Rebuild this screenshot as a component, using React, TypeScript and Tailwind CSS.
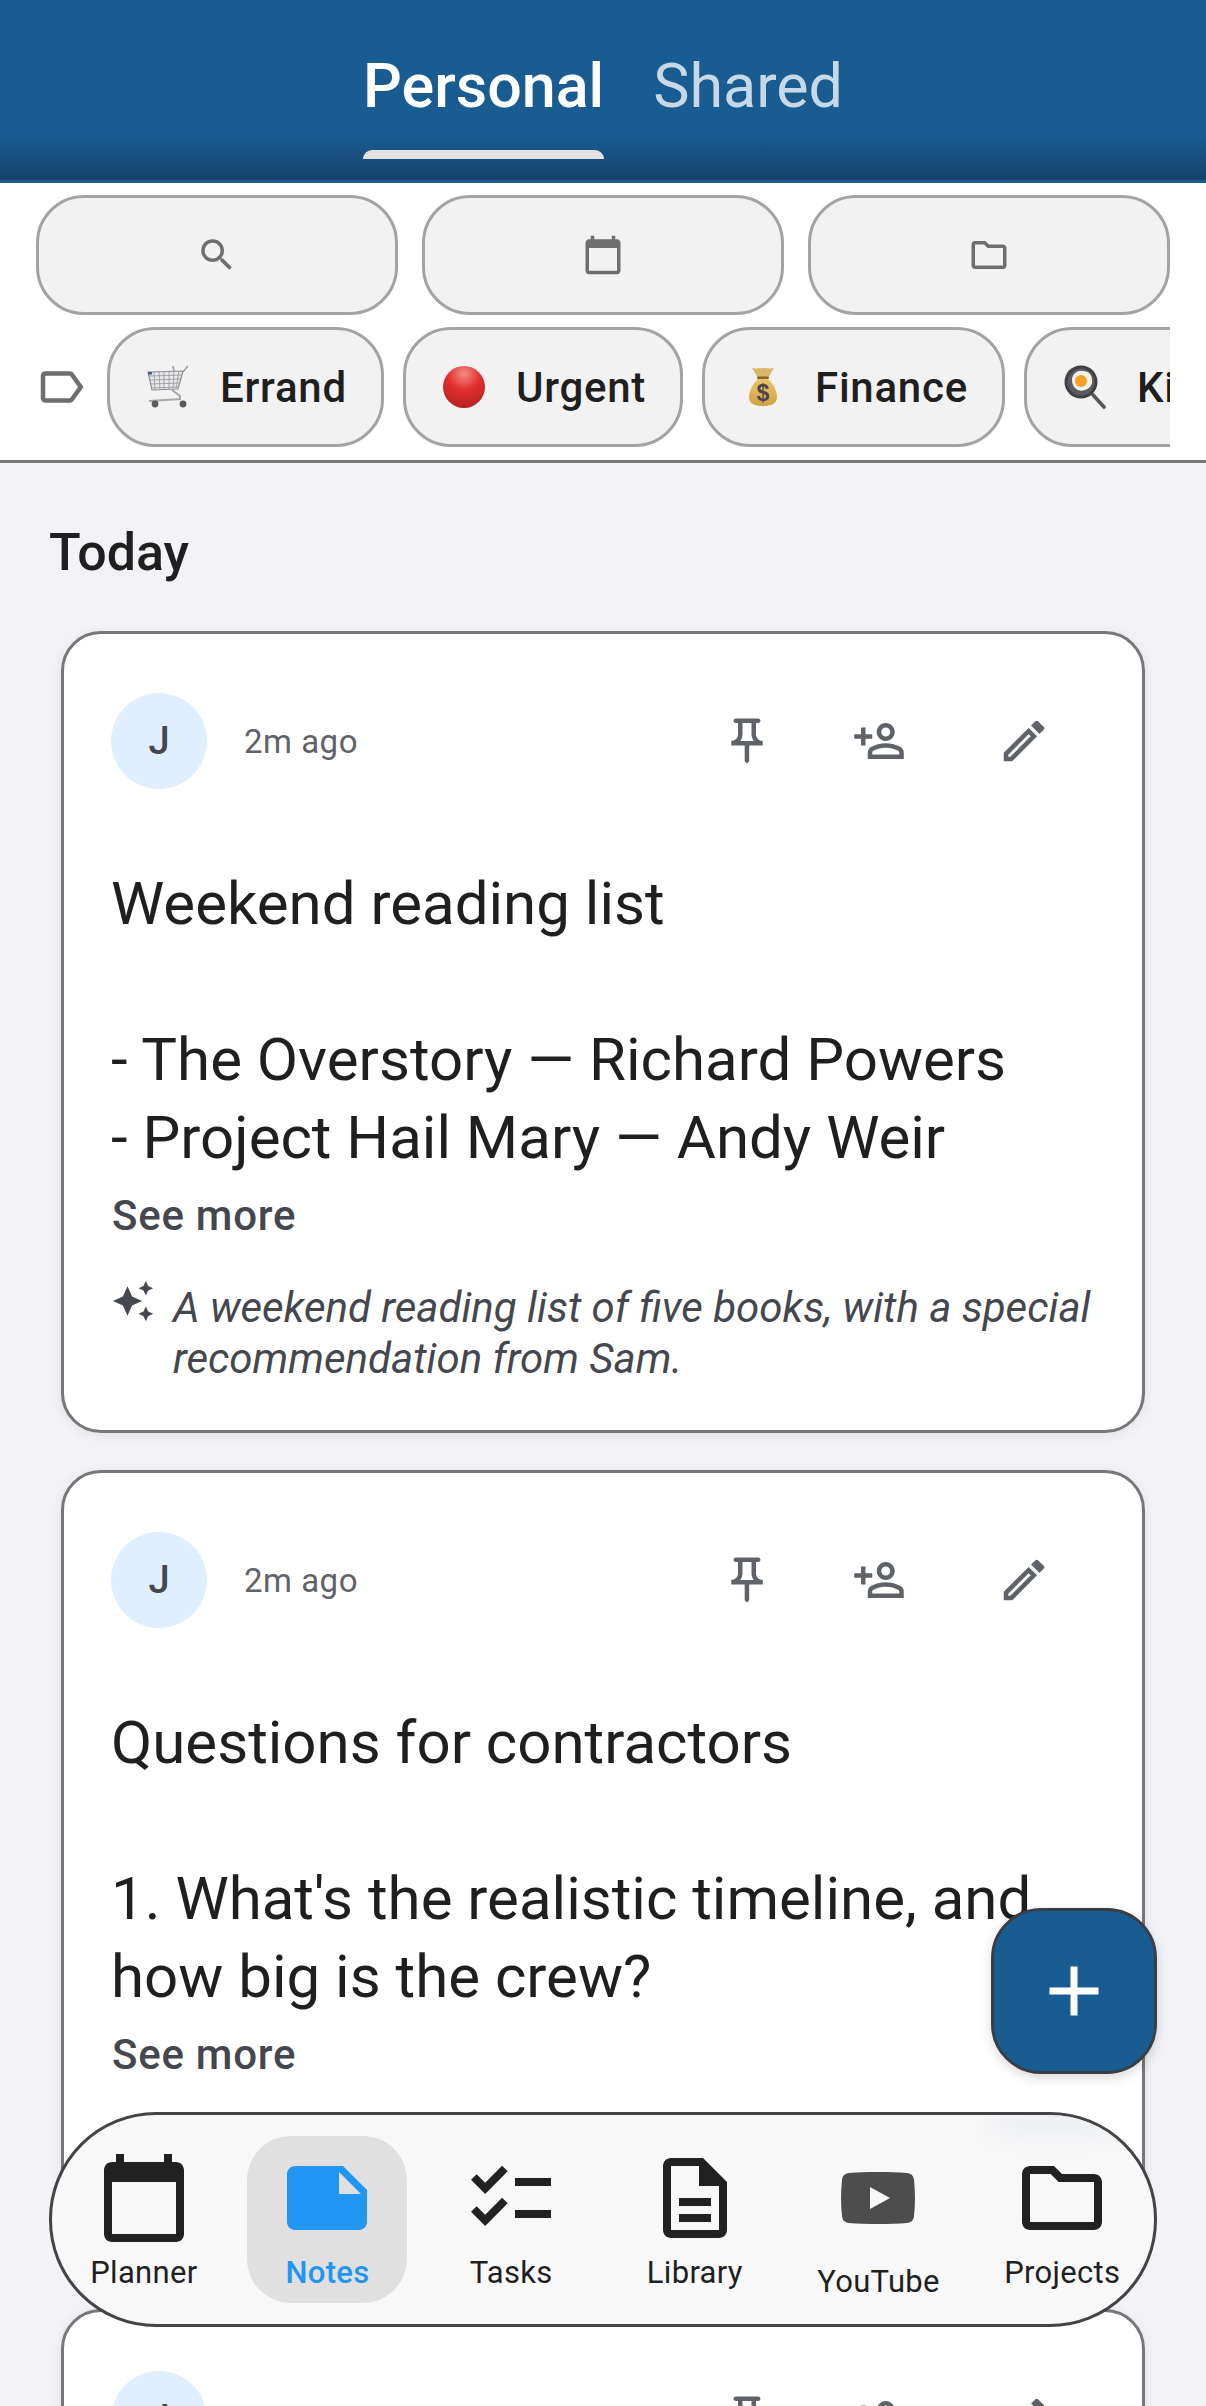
import React from "react";
import {
  MdSearch,
  MdCalendarToday,
  MdOutlineFolder,
  MdOutlineLabel,
  MdOutlinePushPin,
  MdOutlinePersonAddAlt,
  MdOutlineEdit,
  MdAutoAwesome,
  MdNote,
  MdChecklist,
  MdOutlineDescription,
  MdAdd,
} from "react-icons/md";

function CartEmoji() {
  return (
    <svg width="42" height="44" viewBox="0 0 42 44" fill="none">
      <path d="M1 7l35-1-5 18-26 1z" fill="#e9e9eb" />
      <path
        d="M2 11l33-1M3 15l31-1M3 19l30-1M4 23l28-1M7 7l1 18M12 7l1 18M17 7v18M22 6v18M27 6l-1 18M32 6l-3 18"
        stroke="#9c9ca0"
        strokeWidth="0.9"
      />
      <path d="M1 7l35-1-5 18-26 1z" stroke="#8f8f93" strokeWidth="1.2" />
      <rect x="1" y="7" width="4" height="2.5" fill="#3f5f8c" />
      <path d="M36 7l5-6M26 1l1 6" stroke="#a2a2a6" strokeWidth="1.6" />
      <path d="M25 25l8 6v4M2 36l32-2" stroke="#a8a8ab" strokeWidth="2" />
      <circle cx="8" cy="39" r="3.4" fill="#5a5a5e" />
      <circle cx="36" cy="39" r="3.4" fill="#5a5a5e" />
    </svg>
  );
}

function RedCircleEmoji() {
  return (
    <svg width="44" height="44" viewBox="0 0 44 44">
      <defs>
        <radialGradient id="redBall" cx="50%" cy="18%" r="85%">
          <stop offset="0%" stopColor="#f58a85" />
          <stop offset="45%" stopColor="#e0312f" />
          <stop offset="100%" stopColor="#b51f22" />
        </radialGradient>
      </defs>
      <circle cx="22" cy="22" r="21" fill="url(#redBall)" />
    </svg>
  );
}

function MoneyBagEmoji() {
  return (
    <svg width="30" height="40" viewBox="0 0 30 40">
      <defs>
        <linearGradient id="bagFill" x1="0" y1="0" x2="0" y2="1">
          <stop offset="0%" stopColor="#e8c468" />
          <stop offset="100%" stopColor="#d3a23f" />
        </linearGradient>
      </defs>
      <path d="M4 1c4 1 7 0 11 0s7 1 11 0l-6 10H10z" fill="#d9b66a" />
      <rect x="9" y="9.500" width="12" height="2.500" rx="1.200" fill="#8a6526" />
      <path d="M10 12h10c5 4 9 12 9 18 0 7-6 9-14 9s-14-2-14-9c0-6 4-14 9-18z" fill="url(#bagFill)" />
      <text
        x="15"
        y="34"
        textAnchor="middle"
        fontSize="23"
        fontWeight="700"
        fontFamily="Liberation Sans, sans-serif"
        fill="#4b4550"
      >
        $
      </text>
    </svg>
  );
}

function PanEmoji() {
  return (
    <svg width="42" height="44" viewBox="0 0 42 44">
      <path d="M29 30l11 12" stroke="#55565a" strokeWidth="3.600" strokeLinecap="round" />
      <circle cx="17" cy="17" r="16.500" fill="#3f4044" />
      <circle cx="17" cy="17" r="13.500" fill="#5a5b60" />
      <path d="M8 14c1-6 6-9 11-8 6 0 9 4 9 9 1 5-3 9-7 10-6 2-10-1-12-5-1-2-1-4-1-6z" fill="#f4f2e6" />
      <circle cx="17" cy="16" r="6" fill="#f3a224" />
    </svg>
  );
}

function YoutubeIcon() {
  return (
    <svg width="74" height="52" viewBox="0 0 74 52">
      <path
        d="M8 1C25-.3 49-.3 66 1c4 .3 6.700 3 7 7 1.300 12 1.300 24 0 36-.3 4-3 6.700-7 7-17 1.300-41 1.300-58 0-4-.3-6.700-3-7-7C-.3 32-.3 20 1 8c.3-4 3-6.700 7-7z"
        fill="#4d4d4d"
      />
      <path d="M29 15l20 11-20 11z" fill="#f8f8f9" />
    </svg>
  );
}

const chips = [
  { label: "Errand", icon: <CartEmoji />, width: "w-[277px]" },
  { label: "Urgent", icon: <RedCircleEmoji />, width: "w-[280px]" },
  { label: "Finance", icon: <MoneyBagEmoji />, width: "w-[303px]" },
  { label: "Kitchen", icon: <PanEmoji />, width: "w-[300px]" },
];

const navItems = [
  { label: "Planner", icon: <MdCalendarToday size={96} className="text-[#212121]" /> },
  { label: "Notes", icon: <MdNote size={96} className="text-[#2196f3]" />, active: true },
  { label: "Tasks", icon: <MdChecklist size={96} className="text-[#212121]" /> },
  { label: "Library", icon: <MdOutlineDescription size={96} className="text-[#212121]" /> },
  { label: "YouTube", icon: <YoutubeIcon />, low: true },
  { label: "Projects", icon: <MdOutlineFolder size={96} className="text-[#212121]" /> },
];

function FilterButton({ children }: { children: React.ReactNode }) {
  return (
    <div className="flex h-[120px] w-[362px] items-center justify-center rounded-[48px] border-[3px] border-[#a3a3a3] bg-[#f2f2f3] text-[#6e6e6e]">
      {children}
    </div>
  );
}

function NoteCard({
  lines,
  summary,
}: {
  lines?: string[];
  summary?: string[];
}) {
  return (
    <div className="h-[802px] w-[1084px] shrink-0 rounded-[40px] border-[3px] border-[#77777a] bg-white pl-[47px] pr-[50px] pt-[59px] shadow-[0_2px_12px_rgba(0,0,0,0.08)]">
      <div className="flex h-[96px] items-center">
        <div className="flex size-[96px] items-center justify-center rounded-full bg-[#dfefff] text-[38px] font-medium text-[#44474e]">
          J
        </div>
        <span className="ml-[37px] pt-[1px] text-[33px] tracking-[0.5px] text-[#5f6368]">2m ago</span>
        <div className="ml-auto flex items-center text-[#5f6368]">
          <MdOutlinePushPin size={54} className="mr-[78px]" />
          <MdOutlinePersonAddAlt size={54} className="mr-[91px] -scale-x-100" />
          <MdOutlineEdit size={54} className="mr-[41px]" />
        </div>
      </div>
      {lines && (
        <div className="mt-[76px] text-[60px] leading-[78px] text-[#1f1f1f]">
          {lines.map((l, i) => (
            <p key={i} className="min-h-[78px]">
              {l}
            </p>
          ))}
        </div>
      )}
      {lines && (
        <p className="ml-[1px] mt-[11px] text-[42px] font-medium leading-[56px] tracking-[0.75px] text-[#44474e]">
          See more
        </p>
      )}
      {summary && (
        <div className="mt-[38px] flex gap-[18px]">
          <MdAutoAwesome size={44} className="-mt-[3px] shrink-0 text-[#44474e]" />
          <div className="text-[42px] italic leading-[51px] text-[#44474e]">
            {summary.map((s) => (
              <p key={s}>{s}</p>
            ))}
          </div>
        </div>
      )}
    </div>
  );
}

export default function App() {
  return (
    <div className="relative h-[2406px] w-[1206px] overflow-hidden bg-[#f2f2f7] font-['Roboto',sans-serif]">
      {/* header tabs */}
      <div className="relative h-[183px] bg-[#195c91]">
        <div className="absolute inset-x-0 bottom-[3px] h-[45px] bg-gradient-to-b from-[#195c91] to-[#16426b]" />
        <div className="relative flex justify-center gap-[49px] pt-[51px] text-[61px] leading-[70px]">
          <div className="relative font-medium text-white">
            Personal
            <div className="absolute inset-x-0 top-[99px] h-[9px] rounded-t-[12px] bg-[#e2e2e2]" />
          </div>
          <div className="text-[#c7d8e6]">Shared</div>
        </div>
      </div>

      {/* filters */}
      <div className="border-b-[3px] border-[#77777a] bg-white pb-[13px] pt-[12px]">
        <div className="flex gap-[24px] pl-[36px]">
          <FilterButton>
            <MdSearch size={42} />
          </FilterButton>
          <FilterButton>
            <MdCalendarToday size={42} />
          </FilterButton>
          <FilterButton>
            <MdOutlineFolder size={42} />
          </FilterButton>
        </div>
        <div className="mt-[12px] flex items-center">
          <div className="flex w-[107px] justify-center pl-[14px]">
            <MdOutlineLabel size={54} className="text-[#6e6e6e]" />
          </div>
          <div className="flex w-[1063px] gap-[19px] overflow-hidden">
            {chips.map((c) => (
              <div
                key={c.label}
                className={`flex h-[120px] shrink-0 items-center gap-[28px] rounded-[48px] border-[3px] border-[#a3a3a3] bg-[#f2f2f3] pl-[34px] ${c.width}`}
              >
                <div className="flex w-[48px] justify-center">{c.icon}</div>
                <span className="text-[42px] font-medium tracking-[0.75px] text-[#1f1f1f]">{c.label}</span>
              </div>
            ))}
          </div>
        </div>
      </div>

      <h2 className="ml-[49px] mt-[62px] text-[52px] font-medium leading-[56px] text-[#1f1f1f]">Today</h2>

      {/* notes */}
      <div className="ml-[61px] mt-[50px] flex flex-col gap-[37px]">
        <NoteCard
          lines={[
            "Weekend reading list",
            "",
            "- The Overstory — Richard Powers",
            "- Project Hail Mary — Andy Weir",
          ]}
          summary={["A weekend reading list of five books, with a special", "recommendation from Sam."]}
        />
        <NoteCard
          lines={["Questions for contractors", "", "1. What's the realistic timeline, and", "how big is the crew?"]}
        />
        <NoteCard />
      </div>

      {/* add button */}
      <div className="absolute left-[991px] top-[1908px] flex size-[166px] items-center justify-center rounded-[50px] border-[3px] border-[#3a3f45] bg-[#195c91] shadow-[0_4px_12px_rgba(0,0,0,0.15)]">
        <MdAdd size={84} className="text-white" />
      </div>

      {/* bottom nav */}
      <div className="absolute left-[49px] top-[2112px] grid h-[215px] w-[1108px] grid-cols-6 overflow-hidden rounded-[107px] border-[3px] border-[#444446] bg-[#f8f8f9]">
        <div className="absolute right-[40px] top-[-10px] h-[30px] w-[120px] bg-[#eceef1] blur-[12px]" />
        {navItems.map((n) => (
          <div key={n.label} className="relative flex flex-col items-center justify-center">
            <div
              className={`flex h-[167px] w-[160px] flex-col items-center rounded-[44px] pt-[14px] ${n.active ? "bg-[#e0e0e0]" : ""}`}
            >
              <div className="flex h-[96px] items-center justify-center">{n.icon}</div>
              <span
                className={`whitespace-nowrap text-[31px] leading-[40px] tracking-[0.3px] ${n.low ? "mt-[16px]" : "mt-[7px]"} ${n.active ? "font-medium text-[#2196f3]" : "text-[#1f1f1f]"}`}
              >
                {n.label}
              </span>
            </div>
          </div>
        ))}
      </div>
    </div>
  );
}
